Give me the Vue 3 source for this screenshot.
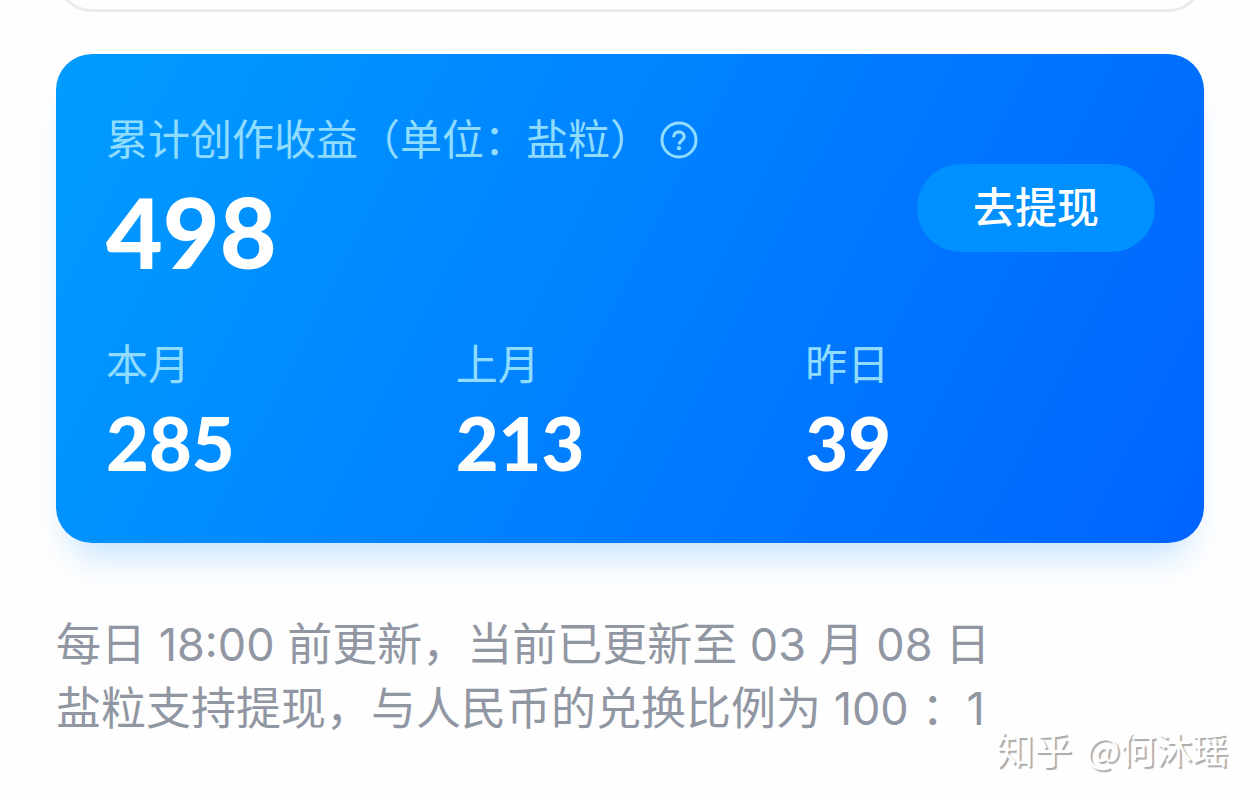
<script setup>
const stats = [
  { label: '本月', value: 285 },
  { label: '上月', value: 213 },
  { label: '昨日', value: 39 },
]
</script>

<template>
  <main class="page">
    <div class="previous-panel"></div>

    <section class="card">
      <header class="summary">
        <div>
          <h1 class="label title">
            <span>累计创作收益（单位：盐粒）</span>
            <button class="help" type="button" aria-label="收益说明">
              <svg viewBox="0 0 40 40" fill="none" stroke="currentColor" stroke-width="3">
                <circle cx="20" cy="20" r="17" />
                <path
                  d="M14.6 17.2c0-3.3 2.2-5.3 5.3-5.3 3 0 5.3 1.9 5.3 4.8 0 3.7-5 3.9-5 7.8"
                  stroke-width="3.2"
                />
                <circle cx="20" cy="28.2" r="2.1" fill="currentColor" stroke="none" />
              </svg>
            </button>
          </h1>
          <p class="total">498</p>
        </div>
        <button class="withdraw" type="button">去提现</button>
      </header>

      <dl class="stats">
        <div v-for="item in stats" :key="item.label">
          <dt class="label">{{ item.label }}</dt>
          <dd class="value">{{ item.value }}</dd>
        </div>
      </dl>
    </section>

    <p class="note">
      每日 18:00 前更新，当前已更新至 03 月 08 日<br />
      盐粒支持提现，与人民币的兑换比例为 100 ：1
    </p>

    <div class="watermark"><span class="brand">知乎</span><span>@何沐瑶</span></div>
  </main>
</template>

<style>
body {
  background: #fefefe;
}
</style>

<style scoped>
.page {
  position: relative;
  min-height: 800px;
  box-sizing: border-box;
  padding: 0 56px;
  overflow: hidden;
  font-family: 'Noto Sans CJK SC', sans-serif;
}

.previous-panel {
  box-sizing: border-box;
  height: 92px;
  margin-top: -80px;
  border: 3px solid #ebebeb;
  border-radius: 36px;
}

.card {
  margin-top: 42px;
  padding: 53px 49px 60px 50px;
  border-radius: 36px;
  background: linear-gradient(117deg, #009cff 0%, #0080ff 50%, #0064ff 100%);
  box-shadow: 0 28px 36px -16px rgba(0, 140, 255, 0.24);
}

.summary {
  display: flex;
  justify-content: space-between;
  align-items: flex-start;
}

.label {
  margin: 0;
  font-size: 42px;
  font-weight: 400;
  line-height: 60px;
  color: #8fdcff;
}

.title {
  display: flex;
  align-items: center;
  gap: 7px;
}

.help {
  display: flex;
  padding: 6px 0 0;
  border: 0;
  background: none;
  color: inherit;
}

.help svg {
  width: 40px;
  height: 40px;
}

.total,
.value {
  margin: 0;
  font-family: Lato, sans-serif;
  font-weight: 900;
  color: #fff;
}

.total {
  margin-top: 14px;
  font-size: 98px;
  line-height: 100px;
}

.withdraw {
  width: 238px;
  height: 88px;
  margin-top: 57px;
  padding: 0 0 6px;
  border: 0;
  border-radius: 44px;
  background: #0090ff;
  color: #fff;
  font-family: inherit;
  font-size: 42px;
  font-weight: 500;
  line-height: 82px;
}

.stats {
  display: grid;
  grid-template-columns: repeat(3, 1fr);
  margin: 51px 0 0;
}

.value {
  margin-top: 11px;
  font-size: 74px;
  line-height: 80px;
}

.note {
  margin: 70px 0 0;
  font-family: Inter, 'Noto Sans CJK SC', sans-serif;
  font-size: 45px;
  line-height: 64px;
  color: #9196a3;
}

.watermark {
  position: absolute;
  right: 32px;
  bottom: 25px;
  display: flex;
  align-items: baseline;
  gap: 14px;
  font-size: 36px;
  line-height: 54px;
  color: #fff;
  text-shadow: 2px 2px 1px #aaa;
}

.brand {
  font-size: 38px;
}
</style>
